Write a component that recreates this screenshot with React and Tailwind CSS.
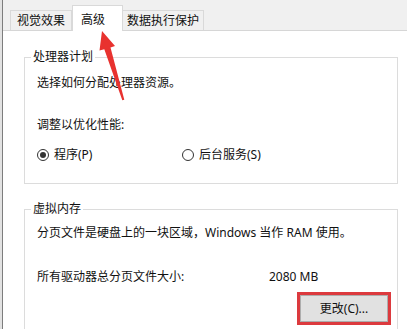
import React from "react";

const font = { fontFamily: '"Noto Sans", "Noto Sans CJK SC", sans-serif' };

const Radio = ({ checked, label }) => (
  <div className="flex items-center gap-[5px]">
    <span className="w-[12px] h-[12px] rounded-full border border-[#333] bg-white flex items-center justify-center">
      {checked && <span className="w-[6px] h-[6px] rounded-full bg-[#333]" />}
    </span>
    <span>{label}</span>
  </div>
);

const Group = ({ title, className, children }) => (
  <div className={"relative shrink-0 ml-[21px] mr-[9px] border border-[#dcdcdc] " + className}>
    <span className="absolute -top-[9px] left-[6px] bg-white px-[2px] leading-[16px]">{title}</span>
    {children}
  </div>
);

export default function App() {
  return (
    <div
      className="relative w-[407px] h-[329px] overflow-hidden bg-white flex text-[12px] leading-[16px] text-[#111]"
      style={font}
    >
      <div className="w-[2px] bg-[#e2e2e2]" />
      <div className="w-px bg-[#7d7d7d]" />
      <div className="flex-1 flex flex-col">
        {/* tabs */}
        <div className="shrink-0 h-[31px] bg-[#f0f0f0] border-b border-[#d6d6d6] flex items-end pl-[7px]">
          <div className="h-[20px] px-[6px] border border-b-0 border-[#d9d9d9] bg-[#f0f0f0] flex items-center">
            视觉效果
          </div>
          <div className="relative z-10 -mb-px h-[26px] w-[51px] pl-[8px] border border-b-0 border-[#d9d9d9] bg-white flex items-start pt-[6px]">
            高级
          </div>
          <div className="h-[20px] px-[4px] border border-b-0 border-l-0 border-[#d9d9d9] bg-[#f0f0f0] flex items-center">
            数据执行保护
          </div>
        </div>

        {/* processor scheduling */}
        <Group title="处理器计划" className="mt-[26px] h-[127px] pl-[12px] pt-[17px]">
          <div>选择如何分配处理器资源。</div>
          <div className="mt-[26px]">调整以优化性能:</div>
          <div className="mt-[14px] flex">
            <div className="w-[145px]">
              <Radio checked label="程序(P)" />
            </div>
            <Radio label="后台服务(S)" />
          </div>
        </Group>

        {/* virtual memory */}
        <Group title="虚拟内存" className="mt-[25px] h-[140px] pl-[12px] pt-[15px]">
          <div>分页文件是硬盘上的一块区域，Windows 当作 RAM 使用。</div>
          <div className="mt-[28px] flex">
            <span className="w-[232px]">所有驱动器总分页文件大小:</span>
            <span>2080 MB</span>
          </div>
          <div className="mt-[7px] flex justify-end pr-[6px]">
            <div className="border-[3px] border-[#dc3a3e]">
              <button className="w-[88px] h-[27px] bg-[#e1e1e1] border border-[#adadad] text-[12px] leading-[16px] text-[#111] flex items-center justify-center">
                更改(C)...
              </button>
            </div>
          </div>
        </Group>
      </div>

      {/* red annotation arrow */}
      <svg
        className="absolute inset-0 pointer-events-none"
        width="407"
        height="329"
        viewBox="0 0 407 329"
      >
        <polygon
          points="102,31 115,46 110.5,47.5 124.3,99.7 122.3,100.3 104.3,49.2 99.5,50.6"
          fill="#e8322f"
        />
      </svg>
    </div>
  );
}
